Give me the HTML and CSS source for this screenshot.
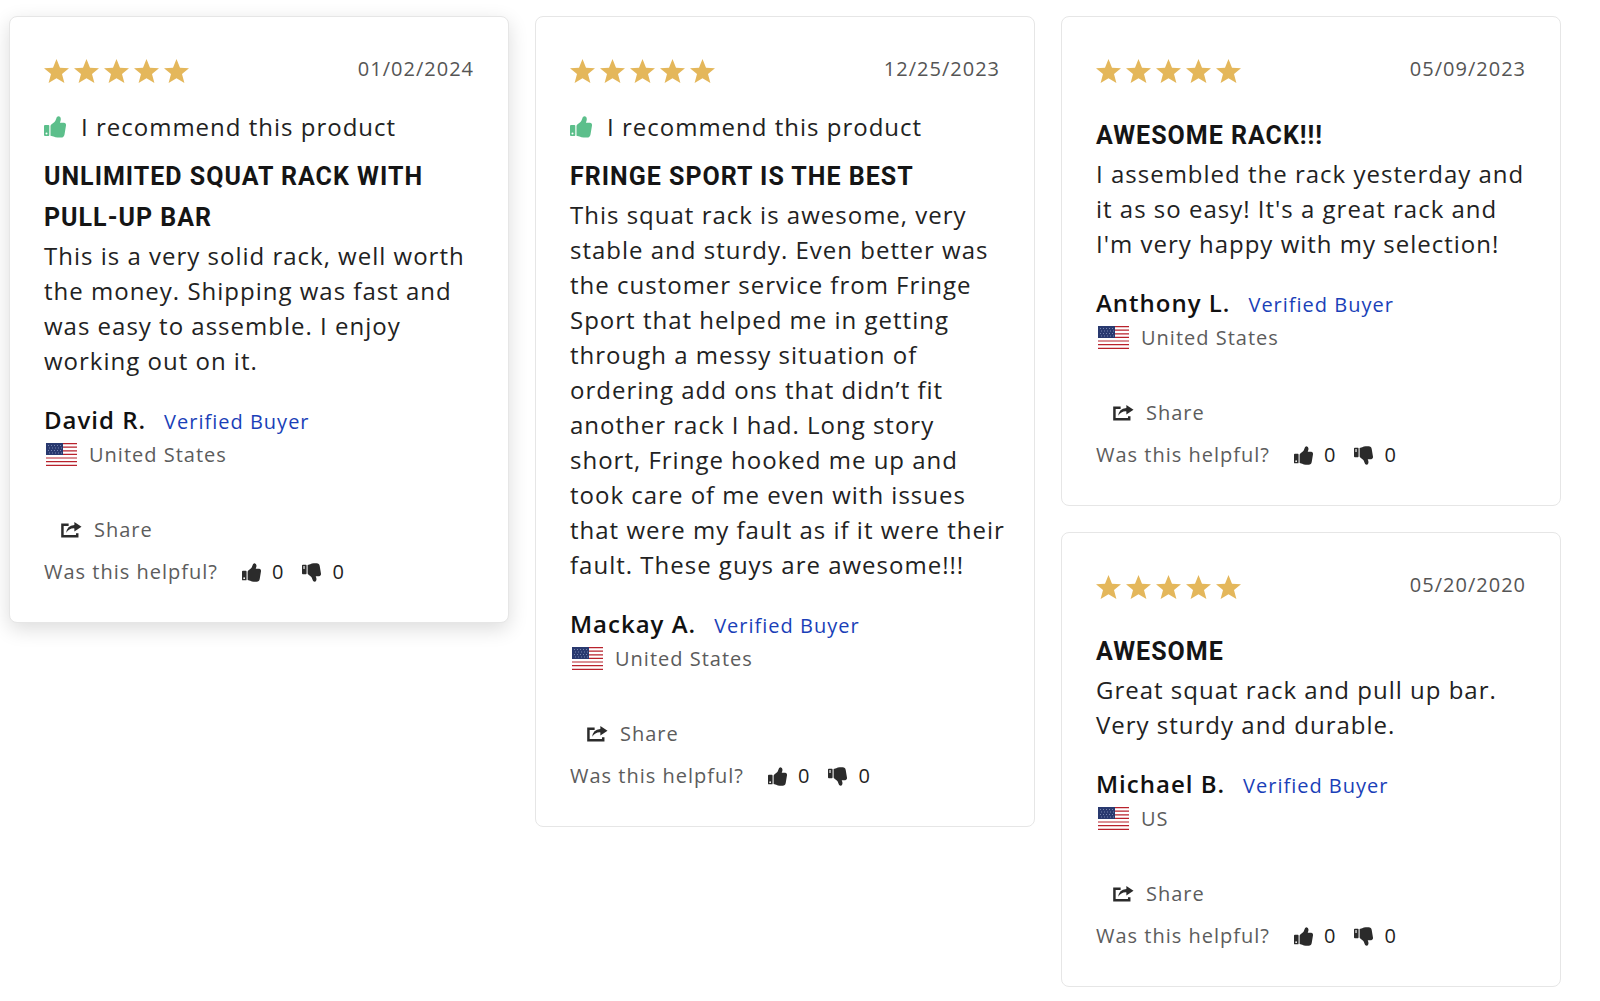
FILE: index.html
```html
<!DOCTYPE html>
<html lang="en">
<head>
<meta charset="utf-8">
<meta name="viewport" content="width=device-width, initial-scale=1">
<title>Customer reviews</title>
<link rel="stylesheet" href="styles.css">
</head>
<body>
<svg class="sprite" aria-hidden="true">
  <symbol id="star" viewBox="0 0 25 24"><path d="M12.500 0L16 8.700L25 9.200L18 15L20.400 24L12.500 19.200L4.600 24L7 15L0 9.200L9 8.700Z"/></symbol>
  <symbol id="stars" viewBox="0 0 145 24">
    <use href="#star" width="25" height="24"/><use href="#star" x="30" width="25" height="24"/><use href="#star" x="60" width="25" height="24"/><use href="#star" x="90" width="25" height="24"/><use href="#star" x="120" width="25" height="24"/>
  </symbol>
  <symbol id="thumb" viewBox="0 0 22 22">
    <path fill-rule="evenodd" d="M1 9H4.500Q5.300 9 5.300 10V19Q5.300 20 4.500 20H1Q0 20 0 19V10Q0 9 1 9ZM2.500 16.600A1 1 0 1 0 2.500 18.600A1 1 0 1 0 2.500 16.600Z"/>
    <path d="M6.500 10.200Q6.500 9.300 7.300 8.600L10.500 6Q11.500 5 12 3.200Q12.600 .4 14.300 .3Q16.800 .3 16.800 3.300Q16.800 4.600 15.900 6.800H20Q22.300 7.200 22 9.500L20.500 18.500Q20 21.600 17 21.600H13.500Q11.500 21.600 9.500 20.600L6.500 19.800Z"/>
  </symbol>
  <symbol id="thumb-down" viewBox="0 0 22 22">
    <path fill-rule="evenodd" d="M1 2H4.500Q5.300 2 5.300 3V12Q5.300 13 4.500 13H1Q0 13 0 12V3Q0 2 1 2ZM1.700 3.400V7H3V3.400Z"/>
    <path d="M6.500 11.800Q6.500 12.700 7.300 13.400L10.500 16Q11.500 17 12 18.800Q12.600 21.600 14.300 21.700Q16.800 21.700 16.800 18.700Q16.800 17.400 15.900 15.200H20Q22.300 14.800 22 12.500L20.500 3.500Q20 .4 17 .4H13.500Q11.500 .4 9.500 1.400L6.500 2.200Z"/>
  </symbol>
  <symbol id="share" viewBox="0 0 22 18">
    <path d="M8 3.500H1.500V15.500H17V12.500" fill="none" stroke="currentColor" stroke-width="2.600"/>
    <path d="M14 .5L21.500 5.500L14 10.500V7.300Q8.500 7 5.500 12Q6 4.500 14 3.700Z"/>
  </symbol>
  <symbol id="flag" viewBox="0 0 31 23">
    <path fill="#fff" d="M0 0H31V23H0Z"/>
    <path stroke="#b8222c" stroke-width="1.200" d="M0 .6H31M0 4.200H31M0 7.800H31M0 11.400H31M0 15H31M0 18.600H31M0 22.300H31"/>
    <path fill="#29396f" d="M0 0H17V12H0Z"/>
    <path stroke="#7684ae" stroke-dasharray="1 2" d="M2 2.500H16M3 5H16M2 7.500H16M3 10H16"/>
  </symbol>
</svg>

<main class="reviews">
  <div class="column">
    <article class="card card-raised">
      <header class="card-head">
        <svg class="stars" role="img" aria-label="5 out of 5 stars"><use href="#stars"/></svg>
        <time class="date" datetime="2024-01-02">01/02/2024</time>
      </header>
      <p class="recommend"><svg class="icon-recommend" aria-hidden="true"><use href="#thumb"/></svg>I recommend this product</p>
      <h2 class="title">Unlimited Squat Rack with Pull-Up Bar</h2>
      <p class="body">This is a very solid rack, well worth the money. Shipping was fast and was easy to assemble. I enjoy working out on it.</p>
      <p class="author"><span class="name">David R.</span><span class="verified">Verified Buyer</span></p>
      <p class="country"><svg class="flag" aria-hidden="true"><use href="#flag"/></svg>United States</p>
      <button class="share" type="button"><svg class="icon-share" aria-hidden="true"><use href="#share"/></svg>Share</button>
      <div class="helpful"><span class="question">Was this helpful?</span>
        <button class="vote" type="button" aria-label="Helpful, 0 votes"><svg class="icon-vote" aria-hidden="true"><use href="#thumb"/></svg>0</button>
        <button class="vote" type="button" aria-label="Not helpful, 0 votes"><svg class="icon-vote" aria-hidden="true"><use href="#thumb-down"/></svg>0</button>
      </div>
    </article>
  </div>

  <div class="column">
    <article class="card">
      <header class="card-head">
        <svg class="stars" role="img" aria-label="5 out of 5 stars"><use href="#stars"/></svg>
        <time class="date" datetime="2023-12-25">12/25/2023</time>
      </header>
      <p class="recommend"><svg class="icon-recommend" aria-hidden="true"><use href="#thumb"/></svg>I recommend this product</p>
      <h2 class="title">Fringe Sport is the best</h2>
      <p class="body">This squat rack is awesome, very stable and sturdy. Even better was the customer service from Fringe Sport that helped me in getting through a messy situation of ordering add ons that didn’t fit another rack I had. Long story short, Fringe hooked me up and took care of me even with issues that were my fault as if it were their fault. These guys are awesome!!!</p>
      <p class="author"><span class="name">Mackay A.</span><span class="verified">Verified Buyer</span></p>
      <p class="country"><svg class="flag" aria-hidden="true"><use href="#flag"/></svg>United States</p>
      <button class="share" type="button"><svg class="icon-share" aria-hidden="true"><use href="#share"/></svg>Share</button>
      <div class="helpful"><span class="question">Was this helpful?</span>
        <button class="vote" type="button" aria-label="Helpful, 0 votes"><svg class="icon-vote" aria-hidden="true"><use href="#thumb"/></svg>0</button>
        <button class="vote" type="button" aria-label="Not helpful, 0 votes"><svg class="icon-vote" aria-hidden="true"><use href="#thumb-down"/></svg>0</button>
      </div>
    </article>
  </div>

  <div class="column">
    <article class="card">
      <header class="card-head">
        <svg class="stars" role="img" aria-label="5 out of 5 stars"><use href="#stars"/></svg>
        <time class="date" datetime="2023-05-09">05/09/2023</time>
      </header>
      <h2 class="title">Awesome rack!!!</h2>
      <p class="body">I assembled the rack yesterday and it as so easy! It's a great rack and I'm very happy with my selection!</p>
      <p class="author"><span class="name">Anthony L.</span><span class="verified">Verified Buyer</span></p>
      <p class="country"><svg class="flag" aria-hidden="true"><use href="#flag"/></svg>United States</p>
      <button class="share" type="button"><svg class="icon-share" aria-hidden="true"><use href="#share"/></svg>Share</button>
      <div class="helpful"><span class="question">Was this helpful?</span>
        <button class="vote" type="button" aria-label="Helpful, 0 votes"><svg class="icon-vote" aria-hidden="true"><use href="#thumb"/></svg>0</button>
        <button class="vote" type="button" aria-label="Not helpful, 0 votes"><svg class="icon-vote" aria-hidden="true"><use href="#thumb-down"/></svg>0</button>
      </div>
    </article>
    <article class="card">
      <header class="card-head">
        <svg class="stars" role="img" aria-label="5 out of 5 stars"><use href="#stars"/></svg>
        <time class="date" datetime="2020-05-20">05/20/2020</time>
      </header>
      <h2 class="title">Awesome</h2>
      <p class="body">Great squat rack and pull up bar. Very sturdy and durable.</p>
      <p class="author"><span class="name">Michael B.</span><span class="verified">Verified Buyer</span></p>
      <p class="country"><svg class="flag" aria-hidden="true"><use href="#flag"/></svg>US</p>
      <button class="share" type="button"><svg class="icon-share" aria-hidden="true"><use href="#share"/></svg>Share</button>
      <div class="helpful"><span class="question">Was this helpful?</span>
        <button class="vote" type="button" aria-label="Helpful, 0 votes"><svg class="icon-vote" aria-hidden="true"><use href="#thumb"/></svg>0</button>
        <button class="vote" type="button" aria-label="Not helpful, 0 votes"><svg class="icon-vote" aria-hidden="true"><use href="#thumb-down"/></svg>0</button>
      </div>
    </article>
  </div>
</main>
</body>
</html>
```
FILE: styles.css
```css
* {
  box-sizing: border-box;
}

body {
  margin: 0;
  background: #fff;
  color: #222;
  font: 400 24px/35px "Open Sans", "Noto Sans", sans-serif;
  letter-spacing: 1px;
}

h2,
p {
  margin: 0;
}

svg {
  display: block;
  flex: none;
  fill: currentColor;
}

button {
  padding: 0;
  border: 0;
  background: none;
  color: inherit;
  font: inherit;
  letter-spacing: inherit;
  cursor: pointer;
}

.sprite {
  position: absolute;
  width: 0;
  height: 0;
}

.reviews {
  display: grid;
  grid-template-columns: repeat(3, minmax(0, 1fr));
  gap: 26px;
  align-items: start;
  padding: 16px 39px 12px 9px;
}

.column {
  display: flex;
  flex-direction: column;
  gap: 26px;
}

.card {
  display: flex;
  flex-direction: column;
  padding: 34px;
  border: 1px solid #e6e6e6;
  border-radius: 8px;
  background: #fff;
}

.card-raised {
  box-shadow: 0 6px 20px rgba(0, 0, 0, 0.14);
}

.card-head {
  display: flex;
  align-items: center;
  justify-content: space-between;
}

.stars {
  width: 145px;
  height: 24px;
  margin-top: 4px;
  color: #e4b75b;
}

.date {
  color: #555;
  font-size: 20px;
}

.recommend {
  display: flex;
  align-items: center;
  gap: 15px;
  margin-top: 23px;
}

.icon-recommend {
  width: 22px;
  height: 22px;
  color: #5cbf8b;
}

.title {
  margin-top: 29px;
  color: #151515;
  font: 700 25px/41px Roboto, sans-serif;
  text-transform: uppercase;
}

.recommend + .title {
  margin-top: 12px;
}

/* Review text may run slightly past the header's right edge. */
.body {
  margin-right: -6px;
}

.author {
  display: flex;
  align-items: baseline;
  gap: 18px;
  margin-top: 24px;
}

.name {
  color: #111;
  font-weight: 600;
}

.verified {
  color: #1a3fb8;
  font-size: 20px;
}

.country {
  display: flex;
  align-items: center;
  gap: 12px;
  padding-left: 2px;
  color: #5c5c5c;
  font-size: 20px;
  line-height: 31px;
}

.flag {
  width: 31px;
  height: 23px;
}

.share {
  display: flex;
  align-items: center;
  align-self: flex-start;
  gap: 12px;
  margin: 44px 0 10px 17px;
  color: #5c5c5c;
  font-size: 20px;
  line-height: 32px;
}

.icon-share {
  width: 21px;
  height: 18px;
  color: #2b2b2b;
}

.helpful {
  display: flex;
  align-items: center;
  gap: 18px;
  color: #5c5c5c;
  font-size: 20px;
  line-height: 32px;
}

.question {
  margin-right: 6px;
}

.vote {
  display: flex;
  align-items: center;
  gap: 11px;
  color: #222;
}

.icon-vote {
  width: 19px;
  height: 19px;
  color: #2b2b2b;
}
```
